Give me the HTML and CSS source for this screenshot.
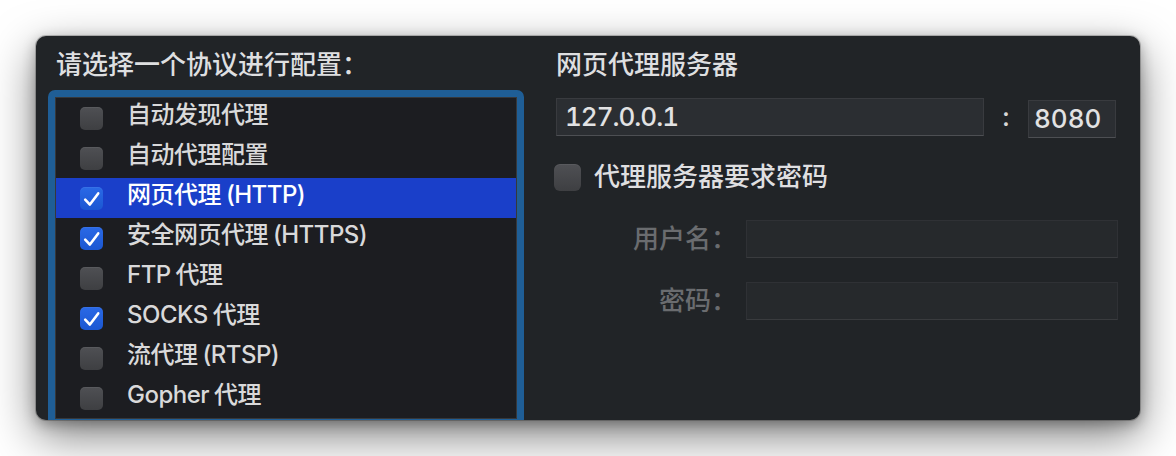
FILE: index.html
```html
<!DOCTYPE html>
<html lang="zh-CN">
<head>
<meta charset="utf-8">
<title>代理</title>
<link rel="stylesheet" href="styles.css">
</head>
<body>
<div class="panel">
  <section class="left">
    <h2 class="title">请选择一个协议进行配置：</h2>
    <div class="focus-ring">
      <ul class="proto-list">
        <li class="row"><span class="cb"></span><span class="label">自动发现代理</span></li>
        <li class="row"><span class="cb"></span><span class="label">自动代理配置</span></li>
        <li class="row selected"><span class="cb on"><svg viewBox="0 0 23 23"><polyline points="5.2,12.6 9.9,17.6 18.2,6.4"/></svg></span><span class="label">网页代理 (HTTP)</span></li>
        <li class="row"><span class="cb on"><svg viewBox="0 0 23 23"><polyline points="5.2,12.6 9.9,17.6 18.2,6.4"/></svg></span><span class="label">安全网页代理 (HTTPS)</span></li>
        <li class="row"><span class="cb"></span><span class="label">FTP 代理</span></li>
        <li class="row"><span class="cb on"><svg viewBox="0 0 23 23"><polyline points="5.2,12.6 9.9,17.6 18.2,6.4"/></svg></span><span class="label">SOCKS 代理</span></li>
        <li class="row"><span class="cb"></span><span class="label">流代理 (RTSP)</span></li>
        <li class="row"><span class="cb"></span><span class="label">Gopher 代理</span></li>
      </ul>
    </div>
  </section>
  <section class="right">
    <h2 class="title">网页代理服务器</h2>
    <div class="host-row">
      <div class="field host">127.0.0.1</div>
      <span class="colon">:</span>
      <div class="field port">8080</div>
    </div>
    <div class="auth-row"><span class="cb big"></span><span class="auth-label">代理服务器要求密码</span></div>
    <div class="cred-grid">
      <span class="cred-label">用户名：</span><div class="field disabled"></div>
      <span class="cred-label">密码：</span><div class="field disabled"></div>
    </div>
  </section>
</div>
</body>
</html>
```
FILE: styles.css
```css
* { box-sizing: border-box; margin: 0; padding: 0; }
html, body { background: #ffffff; }
body {
  padding: 36px 36px 36px 36px;
  height: 456px;
  font-family: Inter, "Noto Sans CJK SC", sans-serif;
  font-weight: 500;
}
.panel {
  width: 1104px;
  height: 384px;
  background: #212427;
  border-radius: 10px;
  overflow: hidden;
  display: flex;
  box-shadow: 0 0 0 1px rgba(0,0,0,0.2), 0 16px 46px rgba(0,0,0,0.5), 0 4px 14px rgba(0,0,0,0.3);
}
.title {
  font-size: 26px;
  line-height: 30px;
  font-weight: 500;
  color: #dedfe0;
  white-space: nowrap;
}
.left {
  width: 488px;
  flex: none;
  padding: 14px 0 0 12px;
}
.left .title { margin-left: 8px; }
.focus-ring {
  margin-top: 10px;
  width: 476px;
  border: 7px solid #1f5e96;
  border-radius: 7px;
}
.proto-list {
  list-style: none;
  background: #1c1d21;
  border: 1px solid #36383b;
  height: 322px;
}
.row {
  height: 40px;
  display: flex;
  align-items: center;
  gap: 24px;
  padding-left: 24px;
  font-size: 24px;
  color: #d9d9da;
  white-space: nowrap;
}
.label { line-height: 30px; padding-bottom: 7px; letter-spacing: -0.5px; word-spacing: -1px; }
.row.selected { background: #1a3fc9; color: #ffffff; }
.cb {
  width: 23px;
  height: 23px;
  flex: none;
  border-radius: 5px;
  background: linear-gradient(#4f5054, #3e3f42);
  box-shadow: inset 0 1px 0 rgba(255,255,255,0.06);
  display: flex;
  align-items: center;
  justify-content: center;
}
.cb.on { background: linear-gradient(#2a69e6, #1b57d2); }
.cb svg { width: 23px; height: 23px; }
.cb polyline {
  fill: none;
  stroke: #ffffff;
  stroke-width: 2.6;
  stroke-linecap: round;
  stroke-linejoin: round;
}
.cb.big { width: 27px; height: 27px; border-radius: 6px; }
.right {
  width: 562px;
  flex: none;
  margin-left: 32px;
  padding-top: 14px;
}
.host-row {
  margin-top: 18px;
  display: flex;
  align-items: flex-start;
  height: 40px;
}
.field {
  height: 38px;
  background: #2b2e32;
  border: 1px solid #393b3f;
  border-bottom-color: #4d4f53;
  font-size: 26px;
  line-height: 36px;
  color: #e2e2e3;
  padding-left: 8px;
  font-variant-numeric: tabular-nums;
}
.host { width: 428px; letter-spacing: -1px; }
.colon {
  width: 44px;
  text-align: center;
  font-size: 26px;
  line-height: 38px;
  color: #d6d6d6;
}
.port { width: 88px; margin-top: 2px; padding-left: 5px; }
.auth-row {
  margin-top: 26px;
  margin-left: -2px;
  height: 27px;
  display: flex;
  align-items: center;
  gap: 13px;
  font-size: 26px;
  color: #dfdfe0;
  white-space: nowrap;
}
.auth-label { line-height: 30px; padding-bottom: 2px; }
.cred-grid {
  margin-top: 29px;
  display: grid;
  grid-template-columns: 181px 372px;
  column-gap: 9px;
  row-gap: 24px;
}
.cred-label {
  text-align: right;
  font-size: 26px;
  line-height: 38px;
  color: #6a6c6f;
  white-space: nowrap;
}
.field.disabled {
  background: #26292c;
  border-color: #2f3135;
  border-bottom-color: #393b3e;
}
```
